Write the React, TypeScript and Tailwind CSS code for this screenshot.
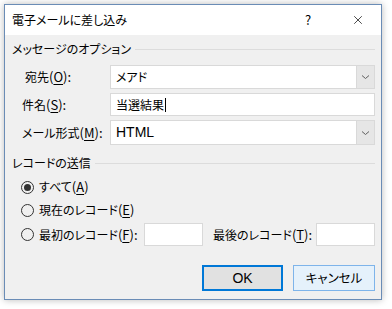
import { X } from "lucide-react"

const font = "font-['Noto_Sans_CJK_JP','Noto_Sans',sans-serif] [font-feature-settings:'palt']"

function Chevron() {
  return (
    <svg width="9" height="6" viewBox="0 0 9 6" className="text-[#606060]">
      <path d="M1 1.5 L4.5 4.5 L8 1.5" fill="none" stroke="currentColor" strokeWidth="1" />
    </svg>
  )
}

function DropButton() {
  return (
    <div className="flex w-[18px] items-center justify-center border-l border-[#d9d9d9] bg-[#e6e6e6]">
      <Chevron />
    </div>
  )
}

function GroupHeader({ title }: { title: string }) {
  return (
    <div className="flex h-[14px] items-center gap-[4px] text-[12px] text-black">
      <span>{title}</span>
      <div className="h-px flex-1 bg-[#dcdcdc]" />
    </div>
  )
}

function Radio({ checked }: { checked?: boolean }) {
  return (
    <div className="flex h-[13px] w-[13px] shrink-0 items-center justify-center rounded-full border border-[#333]">
      {checked && <div className="h-[7px] w-[7px] rounded-full bg-[#333]" />}
    </div>
  )
}

function Label({ text, k, colon = true }: { text: string; k: string; colon?: boolean }) {
  return (
    <span className="whitespace-nowrap">
      {text}<span className="text-[13px]">(<span className="underline underline-offset-2">{k}</span>){colon ? ":" : ""}</span>
    </span>
  )
}

export default function App() {
  return (
    <div className={`h-[309px] w-[392px] bg-white pl-[4px] pt-[4px] ${font}`}>
      <div className="flex h-[296px] w-[378px] flex-col border border-[#6a8cb6] shadow-[0_0_7px_rgba(0,0,0,0.28)]">
        <div className="flex h-[30px] items-center bg-white pl-[7px] text-[12px] text-black">
          <span className="flex-1">電子メールに差し込み</span>
          <span className="w-[46px] text-[13px]">?</span>
          <X className="mr-[16px] h-[14px] w-[14px]" strokeWidth={1.2} />
        </div>
        <div className="flex flex-1 flex-col bg-[#f0f0f0] pl-[7px] pr-[6px] pt-[7px]">
          <GroupHeader title="メッセージのオプション" />
          <div className="mt-[9px] flex flex-col gap-[4px] text-[12px] text-black">
            <div className="flex items-center">
              <div className="w-[98px] pl-[13px]"><Label text="宛先" k="O" /></div>
              <div className="flex h-[24px] w-[265px] border border-[#d9d9d9] bg-white">
                <div className="flex flex-1 items-center pl-[5px] text-[12px]">メアド</div>
                <DropButton />
              </div>
            </div>
            <div className="flex items-center">
              <div className="w-[98px] pl-[10px]"><Label text="件名" k="S" /></div>
              <div className="flex h-[23px] w-[265px] items-center border border-[#d9d9d9] bg-white pl-[5px] text-[12px]">
                当選結果
                <div className="ml-[1px] h-[14px] w-px bg-black" />
              </div>
            </div>
            <div className="flex items-center">
              <div className="w-[98px] pl-[10px]"><Label text="メール形式" k="M" /></div>
              <div className="flex h-[25px] w-[265px] border border-[#d9d9d9] bg-white">
                <div className="flex flex-1 items-center pl-[5px] font-['Liberation_Sans',sans-serif] text-[14px]">HTML</div>
                <DropButton />
              </div>
            </div>
          </div>
          <div className="mt-[11px]">
            <GroupHeader title="レコードの送信" />
          </div>
          <div className="mt-[7px] flex flex-col text-[12px] text-black">
            <div className="flex h-[20px] items-center gap-[5px] pl-[9px]">
              <Radio checked />
              <Label text="すべて" k="A" colon={false} />
            </div>
            <div className="mt-[3px] flex h-[20px] items-center gap-[5px] pl-[9px]">
              <Radio />
              <Label text="現在のレコード" k="E" colon={false} />
            </div>
            <div className="mt-[3px] flex h-[23px] items-center pl-[9px]">
              <div className="flex w-[123px] items-center gap-[5px]">
                <Radio />
                <Label text="最初のレコード" k="F" />
              </div>
              <div className="h-[23px] w-[59px] border border-[#d9d9d9] bg-white" />
              <div className="w-[113px] pl-[10px]"><Label text="最後のレコード" k="T" /></div>
              <div className="h-[23px] w-[59px] border border-[#d9d9d9] bg-white" />
            </div>
          </div>
          <div className="mt-[19px] flex justify-end gap-[10px] text-[12.5px] text-black">
            <button className="flex h-[26px] w-[81px] items-center justify-center border-2 border-[#0078d7] bg-[#e1e1e1] font-['Liberation_Sans',sans-serif] text-[14px]">
              OK
            </button>
            <button className="flex h-[26px] w-[82px] items-center justify-center border border-[#7eb4ea] bg-[#e5f1fb]">
              キャンセル
            </button>
          </div>
        </div>
      </div>
    </div>
  )
}
